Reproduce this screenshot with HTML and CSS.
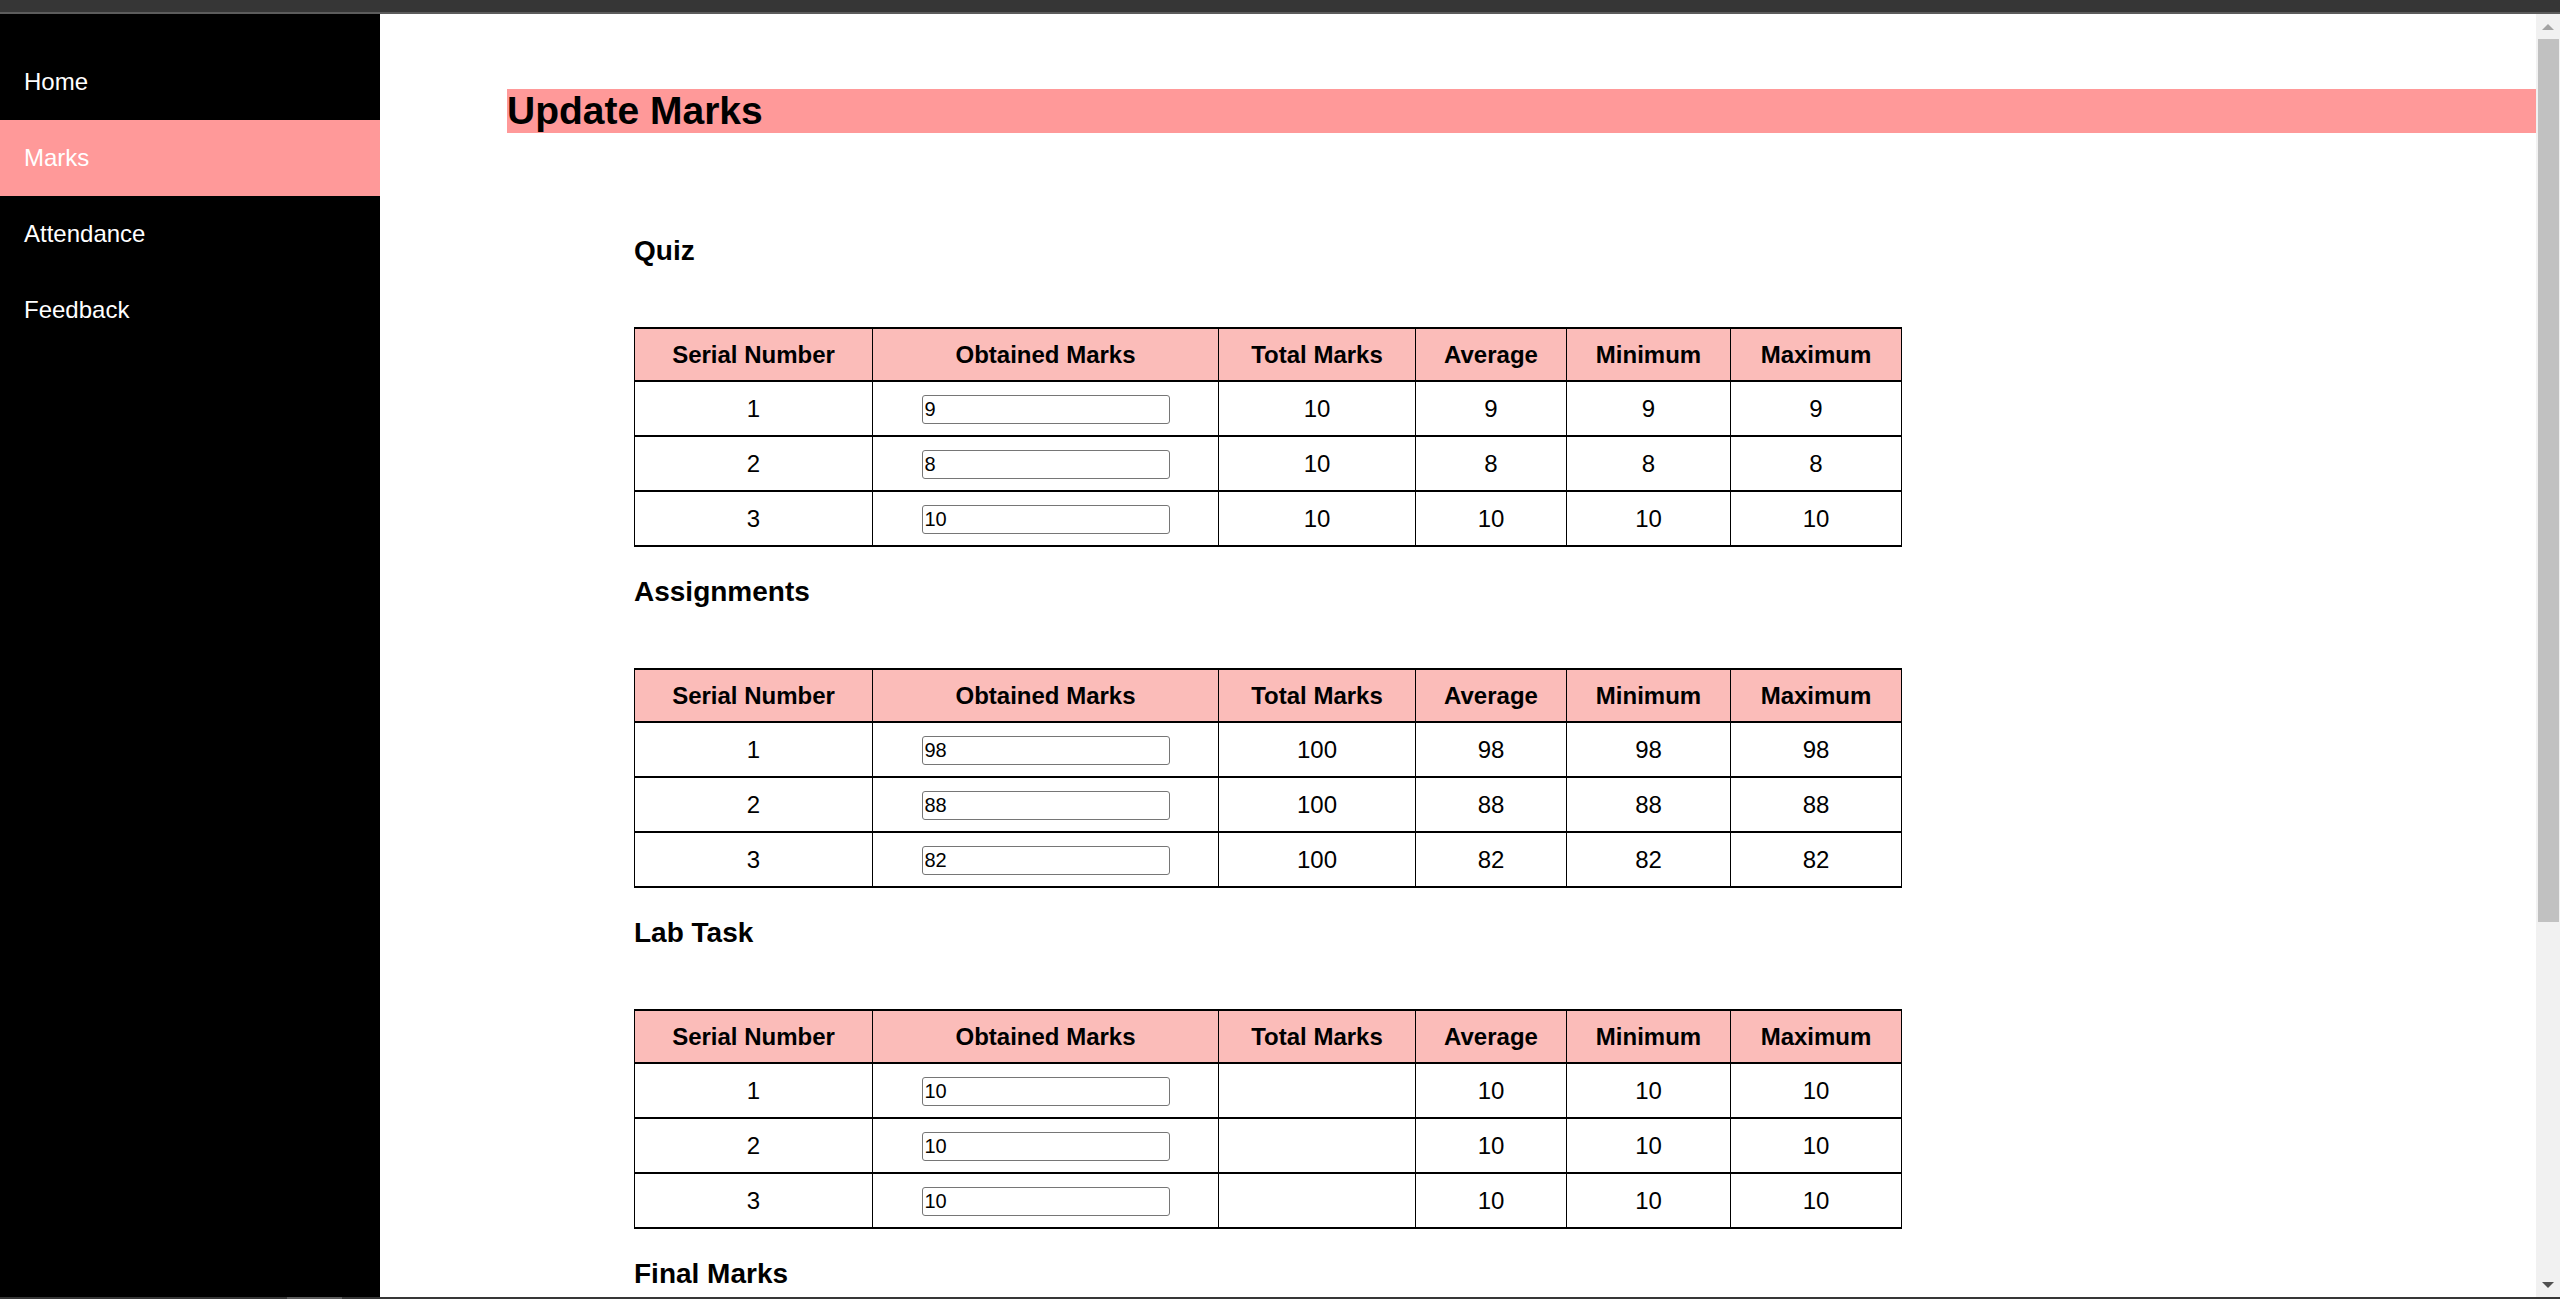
FILE: index.html
```html
<!DOCTYPE html>
<html lang="en">
<head>
<meta charset="utf-8">
<title>Update Marks</title>
<link rel="stylesheet" href="styles.css">
</head>
<body>
<div class="topbar"></div>
<div class="topline"></div>
<div class="window">
  <nav class="sidebar">
    <a class="nav-item" href="#">Home</a>
    <a class="nav-item active" href="#">Marks</a>
    <a class="nav-item" href="#">Attendance</a>
    <a class="nav-item" href="#">Feedback</a>
  </nav>
  <main class="main">
    <h1 class="page-title">Update Marks</h1>
    <section class="marks-section">
      <h3 class="section-title first">Quiz</h3>
      <table class="marks-table">
        <colgroup><col class="c1"><col class="c2"><col class="c3"><col class="c4"><col class="c5"><col class="c6"></colgroup>
        <thead><tr><th>Serial Number</th><th>Obtained Marks</th><th>Total Marks</th><th>Average</th><th>Minimum</th><th>Maximum</th></tr></thead>
        <tbody>
          <tr><td>1</td><td><input class="mark-input" type="text" value="9"></td><td>10</td><td>9</td><td>9</td><td>9</td></tr>
          <tr><td>2</td><td><input class="mark-input" type="text" value="8"></td><td>10</td><td>8</td><td>8</td><td>8</td></tr>
          <tr><td>3</td><td><input class="mark-input" type="text" value="10"></td><td>10</td><td>10</td><td>10</td><td>10</td></tr>
        </tbody>
      </table>
      <h3 class="section-title">Assignments</h3>
      <table class="marks-table">
        <colgroup><col class="c1"><col class="c2"><col class="c3"><col class="c4"><col class="c5"><col class="c6"></colgroup>
        <thead><tr><th>Serial Number</th><th>Obtained Marks</th><th>Total Marks</th><th>Average</th><th>Minimum</th><th>Maximum</th></tr></thead>
        <tbody>
          <tr><td>1</td><td><input class="mark-input" type="text" value="98"></td><td>100</td><td>98</td><td>98</td><td>98</td></tr>
          <tr><td>2</td><td><input class="mark-input" type="text" value="88"></td><td>100</td><td>88</td><td>88</td><td>88</td></tr>
          <tr><td>3</td><td><input class="mark-input" type="text" value="82"></td><td>100</td><td>82</td><td>82</td><td>82</td></tr>
        </tbody>
      </table>
      <h3 class="section-title">Lab Task</h3>
      <table class="marks-table">
        <colgroup><col class="c1"><col class="c2"><col class="c3"><col class="c4"><col class="c5"><col class="c6"></colgroup>
        <thead><tr><th>Serial Number</th><th>Obtained Marks</th><th>Total Marks</th><th>Average</th><th>Minimum</th><th>Maximum</th></tr></thead>
        <tbody>
          <tr><td>1</td><td><input class="mark-input" type="text" value="10"></td><td></td><td>10</td><td>10</td><td>10</td></tr>
          <tr><td>2</td><td><input class="mark-input" type="text" value="10"></td><td></td><td>10</td><td>10</td><td>10</td></tr>
          <tr><td>3</td><td><input class="mark-input" type="text" value="10"></td><td></td><td>10</td><td>10</td><td>10</td></tr>
        </tbody>
      </table>
      <h3 class="section-title">Final Marks</h3>
    </section>
  </main>
  <div class="scrollbar">
    <div class="sb-button"><span class="arrow-up"></span></div>
    <div class="sb-thumb"></div>
    <div class="sb-track"></div>
    <div class="sb-button"><span class="arrow-down"></span></div>
  </div>
</div>
<div class="bottombar"><div class="bottom-seg"></div></div>
</body>
</html>
```

FILE: styles.css
```css
html, body {
  margin: 0;
  padding: 0;
}

body {
  height: 1299px;
  overflow: hidden;
  display: flex;
  flex-direction: column;
  font-family: "Liberation Sans", Arial, sans-serif;
  color: #000;
  background: #fff;
}

.topbar {
  height: 12px;
  background: #363636;
  flex: none;
}

.topline {
  height: 2px;
  background: #5c5c5c;
  flex: none;
}

.window {
  flex: 1;
  display: flex;
  min-height: 0;
}

.sidebar {
  width: 380px;
  flex: none;
  background: #000;
  padding-top: 30px;
  display: flex;
  flex-direction: column;
}

.nav-item {
  display: block;
  color: #fff;
  text-decoration: none;
  font-size: 24px;
  line-height: 28px;
  padding: 24px 24px;
}

.nav-item.active {
  background: #ff9999;
}

.main {
  flex: 1;
  min-width: 0;
  overflow: hidden;
  padding-top: 75px;
}

.page-title {
  margin: 0 0 0 127px;
  background: #ff9999;
  font-size: 39px;
  font-weight: bold;
  line-height: 44px;
}

.marks-section {
  margin-left: 254px;
}

.section-title {
  font-size: 28px;
  font-weight: bold;
  line-height: 32px;
  margin: 29px 0 60px;
}

.section-title.first {
  margin-top: 102px;
}

.marks-table {
  border-collapse: collapse;
  table-layout: fixed;
  width: 1267px;
  font-size: 24px;
}

.c1 { width: 238px; }
.c2 { width: 346px; }
.c3 { width: 197px; }
.c4 { width: 151px; }
.c5 { width: 164px; }
.c6 { width: 171px; }

.marks-table th,
.marks-table td {
  border-left: 1px solid #000;
  border-right: 1px solid #000;
  border-top: 2px solid #000;
  border-bottom: 2px solid #000;
  text-align: center;
  vertical-align: middle;
  padding: 0;
  line-height: 27px;
}

.marks-table th {
  background: #fbbcb9;
  font-weight: bold;
  height: 51px;
}

.marks-table td {
  height: 53px;
}

.mark-input {
  box-sizing: border-box;
  width: 248px;
  height: 29px;
  border: 1px solid #767676;
  border-radius: 3px;
  padding: 0 2px;
  font-family: "Liberation Sans", Arial, sans-serif;
  font-size: 20px;
  color: #000;
  background: #fff;
  vertical-align: middle;
}

.scrollbar {
  width: 24px;
  flex: none;
  background: #f1f1f1;
  display: flex;
  flex-direction: column;
}

.sb-button {
  height: 25px;
  flex: none;
  display: flex;
  align-items: center;
  justify-content: center;
}

.arrow-up {
  width: 0;
  height: 0;
  border-left: 6px solid transparent;
  border-right: 6px solid transparent;
  border-bottom: 6px solid #a3a3a3;
}

.arrow-down {
  width: 0;
  height: 0;
  border-left: 6px solid transparent;
  border-right: 6px solid transparent;
  border-top: 6px solid #505050;
}

.sb-thumb {
  height: 883px;
  flex: none;
  margin: 0 1px 0 2px;
  background: #c1c1c1;
}

.sb-track {
  flex: 1;
}

.bottombar {
  height: 2px;
  flex: none;
  background: #363636;
  display: flex;
}

.bottom-seg {
  width: 55px;
  margin-left: 287px;
  background: #5c5c5c;
}
```
